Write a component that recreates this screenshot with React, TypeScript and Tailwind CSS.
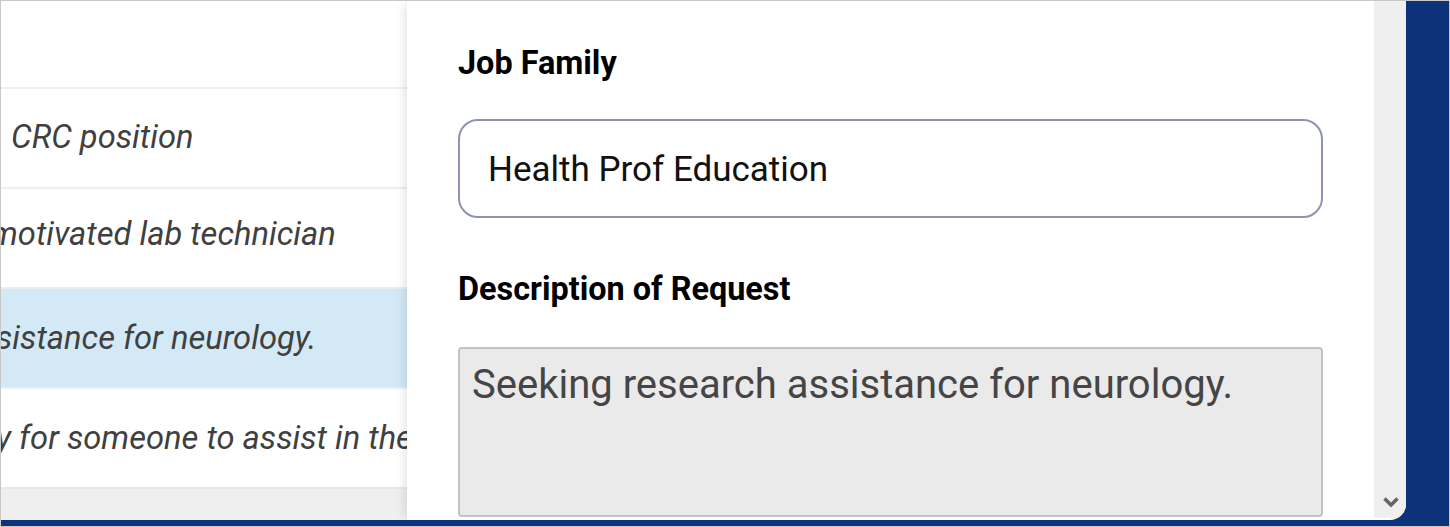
import React from "react";

const rows = [
  { text: "CRC position", pad: "pl-[10px]", pb: "pb-[2px]", hl: false },
  { text: "motivated lab technician", pad: "ml-[-11px]", pb: "pb-[9px]", hl: false },
  { text: "sistance for neurology.", pad: "ml-[-5px]", pb: "pb-[1px]", hl: true },
  { text: "y for someone to assist in the", pad: "ml-[-5px]", pb: "pb-[1px]", hl: false },
];

export default function App() {
  return (
    <div className="w-[1450px] h-[527px] border border-[#c8c8c8] bg-[#0c3279] overflow-hidden font-['Roboto',sans-serif]">
      <div className="flex h-[519px] w-[1405px] rounded-br-[16px] overflow-hidden bg-white">
        {/* left table */}
        <div className="w-[406px] shrink-0 flex flex-col overflow-hidden">
          <div className="h-[86px] shrink-0 bg-white" />
          {rows.map((r, i) => (
            <div
              key={i}
              className={`h-[100px] shrink-0 border-t-2 flex items-center whitespace-nowrap overflow-hidden ${r.pb} ${
                r.hl ? "bg-[#d3e9f6] border-[#e9eef2]" : "bg-white border-[#efefef]"
              }`}
            >
              <span className={`text-[32.7px] italic text-[#404040] leading-[38px] ${r.pad}`}>{r.text}</span>
            </div>
          ))}
          <div className="flex-1 border-t-2 border-[#e8e8e8] bg-[#efefef]" />
        </div>

        {/* drawer panel */}
        <div className="relative z-10 w-[967px] shrink-0 bg-white pt-[43px] px-[51px] shadow-[-5px_0_10px_-3px_rgba(0,0,0,0.12)]">
          <div className="text-[32.4px] font-bold leading-[38px] text-black">Job Family</div>
          <div className="mt-[37px] h-[99px] rounded-[20px] border-2 border-[#8d94b3] flex items-center pl-[28px] pt-[2px]">
            <span className="text-[35px] leading-[41px] text-[#111]">Health Prof Education</span>
          </div>
          <div className="mt-[52px] text-[32.4px] font-bold leading-[38px] text-black">Description of Request</div>
          <div className="mt-[39px] h-[170px] rounded-[4px] border-2 border-[#c3c3c3] bg-[#eaeaea] pl-[12px] pt-[12px]">
            <span className="block text-[40px] leading-[47px] text-[#454545]">Seeking research assistance for neurology.</span>
          </div>
        </div>

        {/* scrollbar */}
        <div className="w-[33px] shrink-0 h-[517px] bg-[#efefef] flex flex-col justify-end items-center pb-[9px]">
          <svg width="18" height="14" viewBox="0 0 18 14">
            <polyline points="2.5,3.5 9,10 15.5,3.5" fill="none" stroke="#666" strokeWidth="3.6" />
          </svg>
        </div>
      </div>
    </div>
  );
}
